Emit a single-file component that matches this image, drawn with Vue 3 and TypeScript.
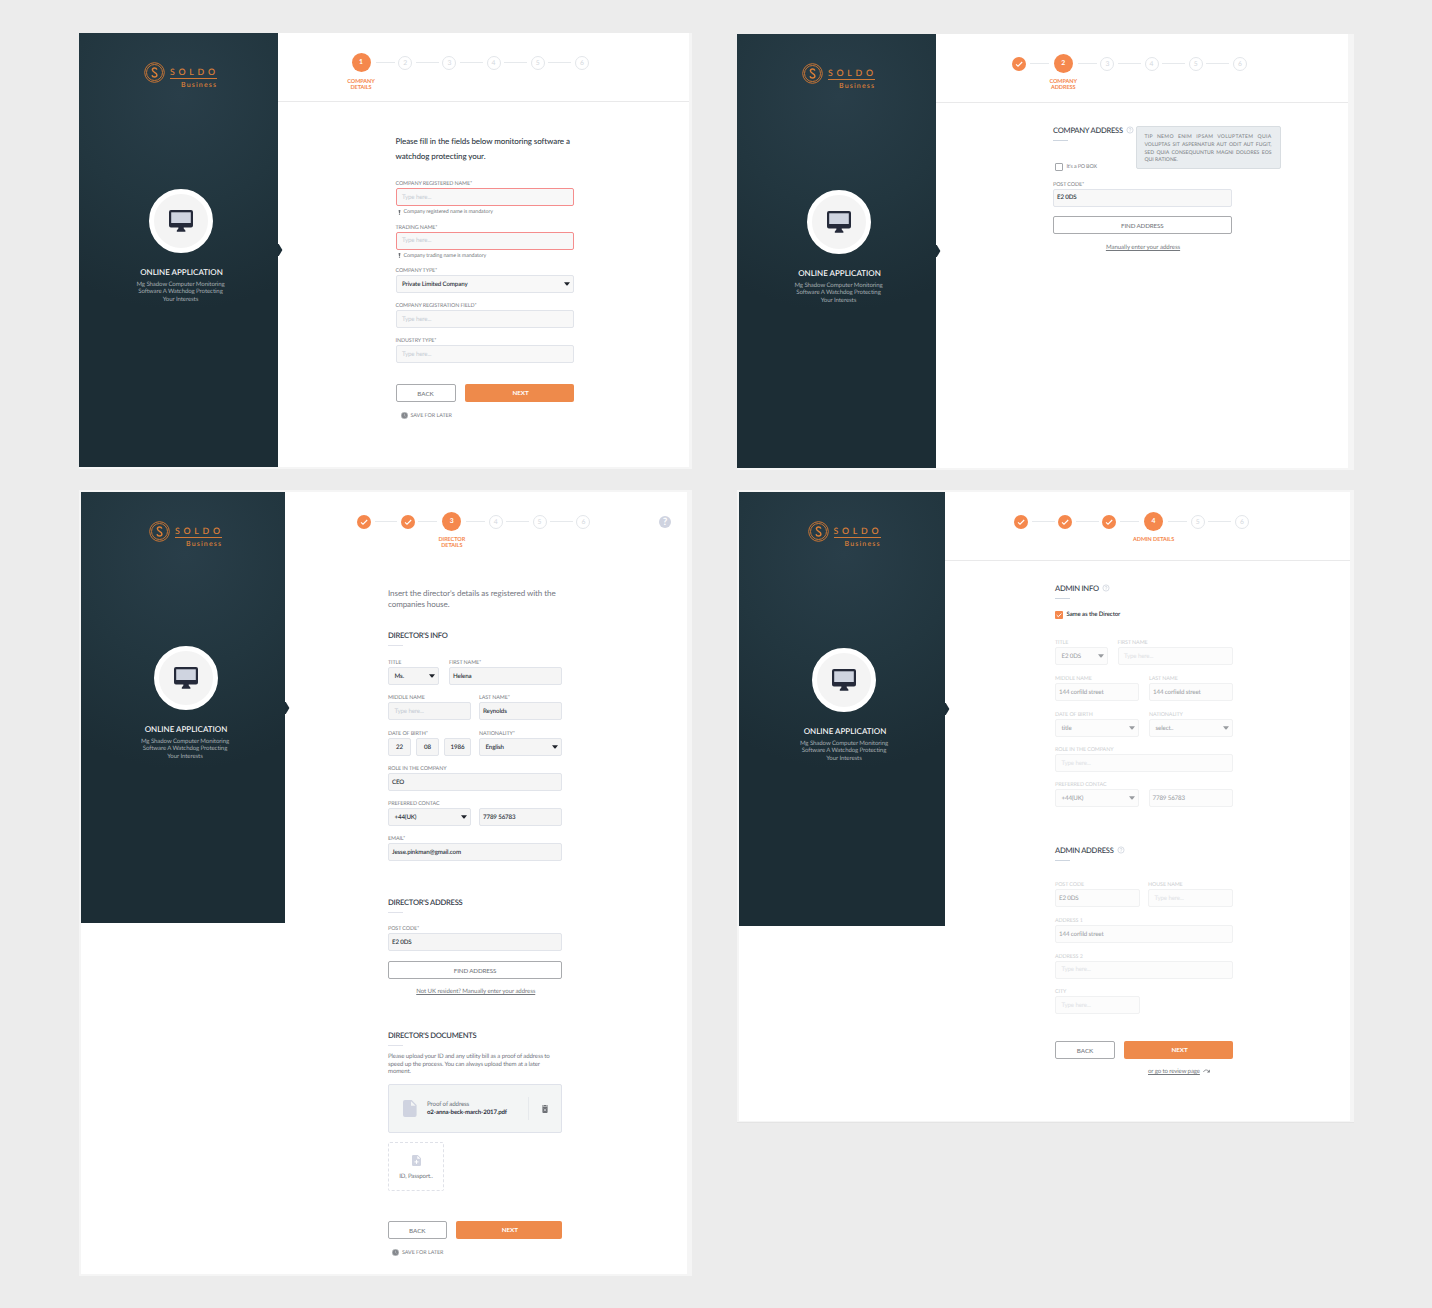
<script setup lang="ts">
interface Field {
  label?: string
  value?: string
  width: number
  before?: number
  select?: boolean
  error?: boolean
  centered?: boolean
}

interface Row {
  kind: 'intro' | 'fields' | 'error' | 'buttons' | 'save' | 'heading' | 'check' | 'find' | 'link' | 'note' | 'doc' | 'upload'
  gap: number
  text?: string
  lines?: string[]
  fields?: Field[]
  help?: boolean
  tip?: boolean
  checked?: boolean
  back?: number
  next?: number
  arrow?: boolean
}

interface Screen {
  id: string
  step: number
  caption: string[]
  help?: boolean
  rows: Row[]
}

const tip = ['TIP NEMO ENIM IPSAM VOLUPTATEM QUIA', 'VOLUPTAS SIT ASPERNATUR AUT ODIT AUT FUGIT,', 'SED QUIA CONSEQUUNTUR MAGNI DOLORES EOS', 'QUI RATIONE.']

const company: Screen = {
  id: 'company',
  step: 1,
  caption: ['COMPANY', 'DETAILS'],
  rows: [
    { kind: 'intro', gap: 31.5, lines: ['Please fill in the fields below monitoring software a', 'watchdog protecting your.'] },
    { kind: 'fields', gap: 14.5, fields: [{ label: 'COMPANY REGISTERED NAME*', width: 178.5, error: true }] },
    { kind: 'error', gap: 2, text: 'Company registered name is mandatory' },
    { kind: 'fields', gap: 6.6, fields: [{ label: 'TRADING NAME*', width: 178.5, error: true }] },
    { kind: 'error', gap: 2, text: 'Company trading name is mandatory' },
    { kind: 'fields', gap: 6.8, fields: [{ label: 'COMPANY TYPE*', value: 'Private Limited Company', width: 178.5, select: true }] },
    { kind: 'fields', gap: 8, fields: [{ label: 'COMPANY REGISTRATION FIELD*', width: 178.5 }] },
    { kind: 'fields', gap: 8, fields: [{ label: 'INDUSTRY TYPE*', width: 178.5 }] },
    { kind: 'buttons', gap: 21, back: 60, next: 109 },
    { kind: 'save', gap: 9.1 },
  ],
}

const address: Screen = {
  id: 'address',
  step: 2,
  caption: ['COMPANY', 'ADDRESS'],
  rows: [
    { kind: 'heading', gap: 21.3, text: 'COMPANY ADDRESS', help: true, tip: true },
    { kind: 'check', gap: 21.7, text: "It's a PO BOX" },
    { kind: 'fields', gap: 8.7, fields: [{ label: 'POST CODE*', value: 'E2 0DS', width: 178.5 }] },
    { kind: 'find', gap: 9.8 },
    { kind: 'link', gap: 9, text: 'Manually enter your address' },
  ],
}

const director: Screen = {
  id: 'director',
  step: 3,
  caption: ['DIRECTOR', 'DETAILS'],
  help: true,
  rows: [
    { kind: 'intro', gap: 26.5, lines: ["Insert the director's details as registered with the", 'companies house.'] },
    { kind: 'heading', gap: 19.5, text: "DIRECTOR'S INFO" },
    { kind: 'fields', gap: 12, fields: [{ label: 'TITLE', value: 'Ms.', width: 51, select: true }, { label: 'FIRST NAME*', value: 'Helena', width: 113, before: 10 }] },
    { kind: 'fields', gap: 8, fields: [{ label: 'MIDDLE NAME', width: 82.5 }, { label: 'LAST NAME*', value: 'Reynolds', width: 83, before: 8.5 }] },
    {
      kind: 'fields',
      gap: 9,
      fields: [
        { label: 'DATE OF BIRTH*', value: '22', width: 23, centered: true },
        { value: '08', width: 23, before: 5, centered: true },
        { value: '1986', width: 27, before: 5, centered: true },
        { label: 'NATIONALITY*', value: 'English', width: 83, before: 8, select: true },
      ],
    },
    { kind: 'fields', gap: 8, fields: [{ label: 'ROLE IN THE COMPANY', value: 'CEO', width: 174 }] },
    { kind: 'fields', gap: 8, fields: [{ label: 'PREFERRED CONTAC', value: '+44(UK)', width: 82.5, select: true }, { value: '7789 56783', width: 83, before: 8.5 }] },
    { kind: 'fields', gap: 8, fields: [{ label: 'EMAIL*', value: 'Jesse.pinkman@gmail.com', width: 174 }] },
    { kind: 'heading', gap: 34.5, text: "DIRECTOR'S ADDRESS" },
    { kind: 'fields', gap: 11.5, fields: [{ label: 'POST CODE*', value: 'E2 0DS', width: 174 }] },
    { kind: 'find', gap: 10 },
    { kind: 'link', gap: 8, text: 'Not UK resident? Manually enter your address' },
    { kind: 'heading', gap: 34, text: "DIRECTOR'S DOCUMENTS" },
    { kind: 'note', gap: 7, lines: ['Please upload your ID and any utility bill as a proof of address to', 'speed up the process. You can always upload them at a later', 'moment.'] },
    { kind: 'doc', gap: 8.7 },
    { kind: 'upload', gap: 9 },
    { kind: 'buttons', gap: 30, back: 58.5, next: 106.5 },
    { kind: 'save', gap: 9 },
  ],
}

const admin: Screen = {
  id: 'admin',
  step: 4,
  caption: ['ADMIN DETAILS'],
  rows: [
    { kind: 'heading', gap: 21.3, text: 'ADMIN INFO', help: true },
    { kind: 'check', gap: 11.7, text: 'Same as the Director', checked: true },
    { kind: 'fields', gap: 19.5, fields: [{ label: 'TITLE', value: 'E2 0DS', width: 53, select: true }, { label: 'FIRST NAME', width: 115.5, before: 9.5 }] },
    { kind: 'fields', gap: 9, fields: [{ label: 'MIDDLE NAME', value: '144 corfild street', width: 84 }, { label: 'LAST NAME', value: '144 corfield street', width: 84, before: 10 }] },
    { kind: 'fields', gap: 9, fields: [{ label: 'DATE OF BIRTH', value: 'title', width: 84, select: true }, { label: 'NATIONALITY', value: 'select..', width: 84, before: 10, select: true }] },
    { kind: 'fields', gap: 8, fields: [{ label: 'ROLE IN THE COMPANY', width: 178 }] },
    { kind: 'fields', gap: 8, fields: [{ label: 'PREFERRED CONTAC', value: '+44(UK)', width: 84, select: true }, { value: '7789 56783', width: 84.5, before: 9.5 }] },
    { kind: 'heading', gap: 37, text: 'ADMIN ADDRESS', help: true },
    { kind: 'fields', gap: 19, fields: [{ label: 'POST CODE', value: 'E2 0DS', width: 85 }, { label: 'HOUSE NAME', width: 85, before: 8 }] },
    { kind: 'fields', gap: 9, fields: [{ label: 'ADDRESS 1', value: '144 corfild street', width: 178 }] },
    { kind: 'fields', gap: 8.5, fields: [{ label: 'ADDRESS 2', width: 178 }] },
    { kind: 'fields', gap: 8.5, fields: [{ label: 'CITY', width: 85 }] },
    { kind: 'buttons', gap: 26.5, back: 60, next: 109 },
    { kind: 'link', gap: 8.5, text: 'or go to review page', arrow: true },
  ],
}

const columns: Screen[][] = [[company, director], [address, admin]]
</script>

<template>
  <div class="board">
    <div v-for="(column, c) in columns" :key="c" class="column">
      <section v-for="screen in column" :key="screen.id" class="window" :class="screen.id">
        <div class="surface">
          <aside class="sidebar">
            <div class="logo">
              <svg class="mark" viewBox="0 0 21 21">
                <circle cx="10.5" cy="10.5" r="9.8" />
                <circle cx="10.5" cy="10.5" r="8" />
                <path d="M12.8 7.6C12.3 5.4 8.5 5.4 8.4 7.9C8.3 10.4 12.9 10.2 12.9 13C12.8 15.7 8.6 15.7 8 13.2" class="ess" />
              </svg>
              <div class="words">
                <span class="soldo">SOLDO</span>
                <span class="business">Business</span>
              </div>
            </div>
            <div class="badge">
              <svg class="monitor" viewBox="0 0 24 22">
                <path d="M2 0H22A2 2 0 0 1 24 2V15.5A2 2 0 0 1 22 17.5H14.7V18.6L16.4 20.6V21.8H7.8V20.6L9.4 18.6V17.5H2A2 2 0 0 1 0 15.5V2A2 2 0 0 1 2 0Z" fill="#252a3a" />
                <rect x="2.2" y="2.3" width="19.6" height="10.7" fill="#cfd4e0" />
              </svg>
            </div>
            <h2>ONLINE APPLICATION</h2>
            <p class="blurb">Mg Shadow Computer Monitoring<br />Software A Watchdog Protecting<br />Your Interests</p>
            <svg class="pointer" viewBox="0 0 5 12"><path d="M0 0H.8L4.4 6L.8 12H0Z" fill="#1c2d36" /></svg>
          </aside>

          <main class="main">
            <header class="top">
              <div class="steps">
                <template v-for="n in 6" :key="n">
                  <i v-if="n > 1" class="line" :class="{ after: n - 1 === screen.step, before: n === screen.step }"></i>
                  <span class="slot">
                    <span class="step" :class="{ active: n === screen.step, done: n < screen.step }">
                      <svg v-if="n < screen.step" viewBox="0 0 14 14"><path d="M4 7.3L6 9.2L10.2 5" /></svg>
                      <template v-else>{{ n }}</template>
                    </span>
                    <span v-if="n === screen.step" class="caption"><span v-for="l in screen.caption" :key="l">{{ l }}</span></span>
                  </span>
                </template>
              </div>
              <span v-if="screen.help" class="round-help">?</span>
            </header>

            <div class="form">
              <div v-for="(row, r) in screen.rows" :key="r" class="row" :class="row.kind" :style="{ marginTop: row.gap + 'px' }">
                <template v-if="row.kind === 'intro' || row.kind === 'note'">
                  <span v-for="l in row.lines" :key="l" class="text-line">{{ l }}</span>
                </template>

                <template v-else-if="row.kind === 'fields'">
                  <div v-for="(f, i) in row.fields" :key="i" class="field" :style="{ width: f.width + 'px', marginLeft: (f.before ?? 0) + 'px' }">
                    <label>{{ f.label }}</label>
                    <div class="box" :class="{ select: f.select, invalid: f.error, centered: f.centered, blank: !f.value }">
                      <span>{{ f.value ?? 'Type here...' }}</span>
                      <svg v-if="f.select" class="caret" viewBox="0 0 6 4"><path d="M0 .2H6L3.6 3.2Q3 3.8 2.4 3.2Z" /></svg>
                    </div>
                  </div>
                </template>

                <template v-else-if="row.kind === 'error'">
                  <svg class="bang" viewBox="0 0 3 6"><path d="M.4 0H2.6L2.1 3.9H.9ZM.8 4.5H2.2V5.8H.8Z" /></svg>
                  <span>{{ row.text }}</span>
                </template>

                <template v-else-if="row.kind === 'heading'">
                  <div class="title">
                    <h3>{{ row.text }}</h3>
                    <svg v-if="row.help" class="hint" viewBox="0 0 8 8">
                      <circle cx="4" cy="4" r="3.1" />
                      <path d="M3 3.3C3 2 5 2 5 3.2C5 4 4 4 4 4.8M4 5.3V5.8" />
                    </svg>
                  </div>
                  <i class="rule"></i>
                  <div v-if="row.tip" class="tip"><span v-for="l in tip" :key="l">{{ l }}</span></div>
                </template>

                <template v-else-if="row.kind === 'check'">
                  <span class="tick" :class="{ on: row.checked }">
                    <svg v-if="row.checked" viewBox="0 0 8 8"><path d="M1.7 4.1L3.3 5.7L6.4 2.5" /></svg>
                  </span>
                  <span class="check-text">{{ row.text }}</span>
                </template>

                <button v-else-if="row.kind === 'find'" class="btn outline">FIND ADDRESS</button>

                <template v-else-if="row.kind === 'link'">
                  <a>{{ row.text }}</a>
                  <svg v-if="row.arrow" class="redo" viewBox="0 0 7 4"><path d="M.5 3C1.5 .6 4 .4 5.6 2.2" /><path d="M6.8.6V3.5H3.9Z" class="head" /></svg>
                </template>

                <template v-else-if="row.kind === 'doc'">
                  <svg class="file" viewBox="0 0 14 17"><path d="M2 0H8.7L13.6 5V15A2 2 0 0 1 11.6 17H2A2 2 0 0 1 0 15V2A2 2 0 0 1 2 0Z" /><path d="M8 1.2V5.8H12.6Z" fill="#f3f5f5" /></svg>
                  <div class="doc-text"><span>Proof of address</span><b>o2-anna-beck-march-2017.pdf</b></div>
                  <i class="divider"></i>
                  <svg class="bin" viewBox="0 0 6 8"><path d="M0 .6H1.7L2.2 0H3.8L4.3.6H6V1.4H0ZM.4 1.9H5.6V7.1Q5.6 8 4.7 8H1.3Q.4 8 .4 7.1Z" /><path d="M1.9 3.7L4.1 6.1M4.1 3.7L1.9 6.1" class="cross" /></svg>
                </template>

                <template v-else-if="row.kind === 'upload'">
                  <svg class="file-add" viewBox="0 0 9 11"><path d="M1.2 0H5.8L9 3.3V9.8A1.2 1.2 0 0 1 7.8 11H1.2A1.2 1.2 0 0 1 0 9.8V1.2A1.2 1.2 0 0 1 1.2 0Z" fill="#cfd3e0" /><path d="M5.3.8V3.8H8.3Z" fill="#fff" /><path d="M4.5 4.9V8.9M2.5 6.9H6.5" stroke="#fff" /></svg>
                  <span>ID, Passport..</span>
                </template>

                <template v-else-if="row.kind === 'buttons'">
                  <button class="btn outline" :style="{ width: row.back + 'px' }">BACK</button>
                  <button class="btn primary" :style="{ width: row.next + 'px' }">NEXT</button>
                </template>

                <template v-else>
                  <svg class="clock" viewBox="0 0 7 7"><circle cx="3.5" cy="3.5" r="3.3" fill="#85888d" /><path d="M3.5 1.7V3.7L4.6 4.4" /></svg>
                  <span class="later">SAVE FOR LATER</span>
                </template>
              </div>
            </div>
          </main>
        </div>
      </section>
    </div>
  </div>
</template>

<style>
body {
  margin: 0;
  background: #ececec;
}
</style>

<style scoped>
.board {
  display: flex;
  gap: 45px;
  box-sizing: border-box;
  width: 1432px;
  height: 1308px;
  padding: 33px 0 0 79px;
  overflow: hidden;
  background: #ececec;
  font-family: Lato, "Liberation Sans", sans-serif;
  text-rendering: geometricPrecision;
  white-space: nowrap;
}
.column {
  display: flex;
  flex-direction: column;
}
.window {
  box-sizing: border-box;
  background: #f5f5f5;
}
.company { width: 613px; height: 436px; padding: 0 3px 2px 0; }
.director { width: 613px; height: 786px; margin-top: 21px; padding: 2px 5px 2px 2px; }
.address { width: 617px; height: 436px; margin-top: 1px; padding: 0 6px 2px 0; }
.admin { width: 617px; height: 633px; margin-top: 20px; padding: 2px 4px 1px 2px; border-bottom: 1px solid #e4e4e4; }
.surface {
  display: flex;
  align-items: flex-start;
  height: 100%;
  background: #fff;
}

.sidebar {
  position: relative;
  display: flex;
  flex-direction: column;
  align-items: center;
  flex: none;
  width: 199px;
  height: 434px;
  background: radial-gradient(circle 215px at 51% 62px, #293e49 0%, #22363f 52%, #1c2d35 100%);
}
.director .sidebar { width: 204px; height: 431px; }
.admin .sidebar { width: 206px; }
.logo {
  display: flex;
  width: 73px;
  margin: 29px 0 0 4px;
}
.director .logo { margin-left: 5px; }
.admin .logo { margin-left: 4px; }
.mark {
  width: 21px;
  height: 21px;
  fill: none;
  stroke: #c87535;
  stroke-width: 1;
}
.mark .ess { stroke: #db7f38; stroke-width: 1.5; }
.words {
  width: 47px;
  margin-left: 5px;
  color: #d97f3a;
}
.soldo,
.business { display: block; }
.soldo {
  box-sizing: border-box;
  height: 17px;
  padding-top: 5px;
  border-bottom: 1px solid #d17a38;
  font-size: 8.8px;
  font-weight: 600;
  line-height: 9px;
  letter-spacing: 3.7px;
}
.business {
  font-size: 7px;
  font-weight: 600;
  line-height: 13px;
  letter-spacing: 1.15px;
  margin-left: 11px;
}
.badge {
  display: flex;
  justify-content: center;
  box-sizing: border-box;
  width: 64px;
  height: 64px;
  margin: 97px 0 0 5px;
  border: 5px solid #fff;
  border-radius: 50%;
  background: #f4f4f4;
}
.director .badge { margin-top: 95px; }
.admin .badge { margin-top: 97px; margin-left: 4px; }
.monitor {
  width: 24px;
  height: 22px;
  margin-top: 16px;
}
h2 {
  margin: 13px 0 0 6px;
  color: #fff;
  font-size: 8px;
  font-weight: 500;
  line-height: 12px;
}
.blurb {
  margin: 2.5px 0 0 4px;
  color: #a3abb0;
  font-size: 6.1px;
  line-height: 7.7px;
  letter-spacing: -.1px;
  text-align: center;
}
.pointer {
  position: absolute;
  top: 211px;
  left: 100%;
  width: 5px;
  height: 12px;
}
.director .pointer { top: 210px; }

.main { flex: 1; }
.top {
  position: relative;
  display: flex;
  box-sizing: border-box;
  height: 69px;
  padding-left: 73px;
  border-bottom: 1px solid #e9e9ea;
}
.director .top { padding-left: 69px; border-color: transparent; }
.admin .top { padding-left: 66px; }
.steps {
  display: flex;
  height: 20px;
  padding-top: 19.5px;
}
.slot {
  display: flex;
  flex-direction: column;
  align-items: center;
  width: 20px;
}
.step {
  box-sizing: border-box;
  flex: none;
  width: 14px;
  height: 14px;
  margin-top: 3.5px;
  border: 1px solid #e3e6ea;
  border-radius: 50%;
  color: #d3d7dd;
  font-size: 6.8px;
  line-height: 13px;
  text-align: center;
}
.step.active {
  width: 19px;
  height: 19px;
  margin-top: 0;
  border: 0;
  background: #f5884d;
  color: #fff;
  font-size: 6.8px;
  font-weight: 700;
  line-height: 19px;
}
.step.done { border: 0; background: #f5884d; }
.step svg {
  display: block;
  width: 14px;
  height: 14px;
  fill: none;
  stroke: #fff;
  stroke-width: 1.1;
}
.caption {
  margin-top: 6.5px;
  color: #f5884d;
  font-size: 5.5px;
  font-weight: 700;
  line-height: 6px;
  letter-spacing: -.07px;
  text-align: center;
}
.company .caption { margin-top: 7px; }
.caption span { display: block; }
.line {
  width: 23.2px;
  height: 1px;
  margin: 9.5px .5px 0;
  background: #e6e9ec;
}
.director .line { width: 22.9px; }
.line.after { width: 19.2px; margin-left: 4.5px; }
.line.before { width: 19.2px; margin-right: 4.5px; }
.director .line.after,
.director .line.before { width: 18.9px; }
.round-help {
  width: 12px;
  height: 12px;
  margin: 24px 0 0 65.5px;
  border-radius: 50%;
  background: #cfd3e0;
  color: #fff;
  font-size: 10px;
  font-weight: 700;
  line-height: 12px;
  text-align: center;
}

.form {
  width: 178.5px;
  margin-left: 117px;
}
.company .form { margin-left: 117.5px; }
.director .form { width: 174px; margin-left: 103px; }
.admin .form { width: 178px; margin-left: 110px; }
.row {
  display: flex;
  position: relative;
  box-sizing: border-box;
}
.intro,
.note { flex-direction: column; }
.intro {
  color: #2f3a45;
  font-size: 8px;
  font-weight: 500;
  line-height: 15.5px;
  letter-spacing: -.09px;
}
.director .intro { color: #74777f; font-size: 8px; font-weight: 400; line-height: 11px; letter-spacing: -.06px; }
.note {
  color: #74777f;
  font-size: 6.1px;
  line-height: 7.6px;
  letter-spacing: -.13px;
}

.field { flex: none; }
label {
  display: block;
  height: 9px;
  color: #7d8186;
  font-size: 5.4px;
  line-height: 10px;
  letter-spacing: -.11px;
}
.box {
  display: flex;
  align-items: center;
  justify-content: space-between;
  box-sizing: border-box;
  height: 18px;
  padding: 0 3px;
  border: 1px solid #e1e4ea;
  border-radius: 2px;
  background: #f8f8f8;
  color: #2f3640;
  font-size: 6.2px;
  font-weight: 600;
  letter-spacing: -.14px;
}
.director .box { background: #f5f5f5; }
.box.select,
.box.blank { padding-left: 5.5px; }
.box.blank { color: #c6ccd4; font-weight: 400; }
.box.invalid { border-color: #f58d8d; }
.box.centered { justify-content: center; }
.caret {
  width: 6px;
  height: 4px;
  fill: #20242c;
}
.admin .fields label { color: #cdcfd2; }
.admin .box { border-color: #f0f1f2; background: #fcfcfc; color: #a0a3a7; font-weight: 500; }
.admin .box.blank { color: #e0e2e5; font-weight: 400; }
.admin .caret { fill: #9a9da1; }

.error {
  align-items: center;
  height: 8px;
  padding-left: 2.5px;
  color: #767a80;
  font-size: 5.3px;
  letter-spacing: -.07px;
}
.bang { width: 3px; height: 5px; margin-right: 2.5px; fill: #6d7075; }

.heading {
  flex-direction: column;
  height: 17px;
}
.title { display: flex; align-items: center; height: 12px; }
h3 {
  height: 12px;
  margin: 0;
  color: #363d4a;
  font-size: 7.6px;
  font-weight: 500;
  line-height: 13px;
  letter-spacing: -.25px;
}
.director h3 { font-weight: 600; }
.hint { width: 8px; height: 8px; margin-left: 3px; fill: none; stroke: #c9ced8; stroke-width: .7; }
.rule { width: 15px; height: 1px; margin-top: 4px; background: #cdd5df; }
.director .rule { background: #e0e2ea; }
.tip {
  position: absolute;
  top: 1.7px;
  left: 82.5px;
  box-sizing: border-box;
  width: 145px;
  height: 43px;
  padding: 7px 8px 0;
  border: 1px solid #d8dde1;
  border-radius: 2px;
  background: #e9edf0;
  color: #85898d;
  font-size: 5.1px;
  font-weight: 500;
  line-height: 7.8px;
}
.tip span { display: block; text-align: justify; text-align-last: justify; }
.tip span:first-child { letter-spacing: .3px; }
.tip span:last-child { text-align-last: left; }

.check { align-items: center; height: 8px; }
.tick {
  box-sizing: border-box;
  width: 8px;
  height: 8px;
  margin-left: 1.5px;
  border: 1px solid #a4a7ab;
  border-radius: 1px;
}
.tick.on { margin-left: 0; border: 0; background: #f5884d; }
.tick svg { display: block; fill: none; stroke: #fff; stroke-width: 1; }
.check-text { margin-left: 4px; color: #7d8186; font-size: 5.4px; letter-spacing: -.15px; }
.tick.on + .check-text { margin-left: 3.5px; color: #2f3640; font-size: 6.1px; font-weight: 600; letter-spacing: -.12px; }

.btn {
  box-sizing: border-box;
  height: 18px;
  padding: 0;
  border-radius: 2px;
  font-family: inherit;
  font-size: 6.3px;
  line-height: 17px;
  letter-spacing: -.08px;
  text-align: center;
}
.outline { border: 1px solid #a9abae; background: #fff; color: #75797e; font-weight: 500; }
.find .btn { width: 100%; font-size: 6.2px; letter-spacing: -.12px; }
.primary { padding-left: 2px; border: 0; background: #ee8a4b; color: #fff; font-weight: 700; line-height: 18px; }
.buttons { justify-content: space-between; }
.link {
  align-items: center;
  justify-content: center;
  height: 8px;
  padding-left: 1.5px;
  color: #75797e;
  font-size: 6.1px;
  line-height: 8px;
  letter-spacing: -.09px;
  text-decoration: underline;
}
.link a { margin-top: 1.5px; }
.address .link { letter-spacing: -.04px; }
.admin .link { justify-content: flex-start; padding-left: 93px; letter-spacing: -.13px; }
.redo { width: 7px; height: 4px; margin-left: 3px; fill: none; stroke: #75797e; stroke-width: .8; }
.redo .head { fill: #75797e; stroke: none; }
.save { align-items: center; height: 8px; padding-left: 5px; color: #7d8186; font-size: 5.4px; letter-spacing: -.05px; }
.later { padding-top: 1px; }
.clock { width: 7px; height: 7px; margin-right: 3px; fill: none; stroke: #c5c7ca; stroke-width: .6; }
.director .save { padding-left: 4px; }

.doc {
  align-items: center;
  height: 49px;
  padding-left: 14px;
  border: 1px solid #dfe2ea;
  border-radius: 2px;
  background: #f3f5f5;
}
.file { width: 14px; height: 17px; fill: #cfd3e0; }
.doc-text { width: 101px; margin: 1px 0 0 10px; color: #6d717a; font-size: 6.2px; line-height: 8.5px; letter-spacing: -.13px; }
.doc-text span,
.doc-text b { display: block; }
.doc-text b { color: #2b3040; font-size: 6.1px; }
.divider { width: 1px; height: 23px; background: #e6e9ec; }
.bin { width: 6px; height: 8px; margin-left: 12.5px; fill: #6d7075; }
.bin .cross { stroke: #d8d9db; stroke-width: .7; }
.upload {
  flex-direction: column;
  align-items: center;
  width: 56px;
  height: 49px;
  padding-top: 11.5px;
  border: 1px dashed #dfe1e8;
  border-radius: 2px;
  color: #6d717a;
  font-size: 6.1px;
  line-height: 8px;
  letter-spacing: -.12px;
}
.file-add { width: 9px; height: 11px; margin-bottom: 7px; }
</style>
